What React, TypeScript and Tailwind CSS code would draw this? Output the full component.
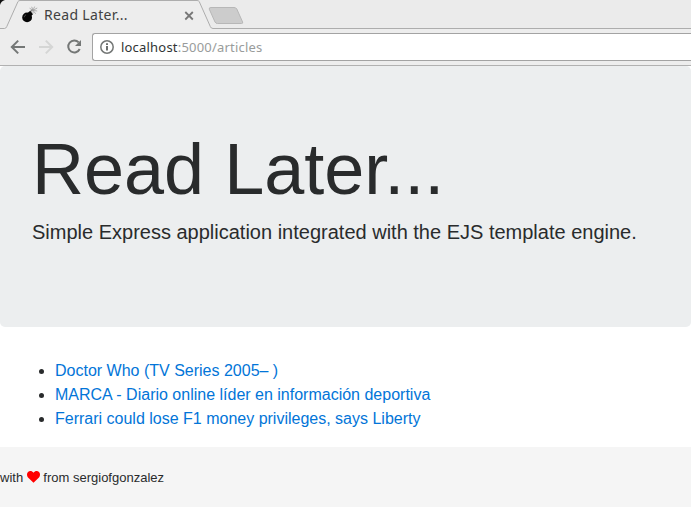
const articles = [
  'Doctor Who (TV Series 2005– )',
  'MARCA - Diario online líder en información deportiva',
  'Ferrari could lose F1 money privileges, says Liberty',
];

function BombIcon() {
  return (
    <svg width="17" height="17" viewBox="0 0 17 17" className="shrink-0">
      <circle cx="6.1" cy="11.4" r="4.9" fill="#050505" />
      <path d="M7 6.4 9.3 4.8 12 8.2 10 10Z" fill="#050505" />
      <path d="M3.3 11.2c0-1.2.7-2 1.8-2.3" stroke="#666" strokeWidth=".8" fill="none" />
      <path d="M10.2 5.6C10 3.9 10.8 3.6 12 4.2" stroke="#666" strokeWidth="1" fill="none" />
      <path
        d="M12 4.4 8.6 2.2M12 4.4 10.7.8M12 4.4 13.6.6M12 4.4 16.2 2M12 4.4 16.2 5M12 4.4 14.7 7.8M12 4.4 12 7.6"
        stroke="#a0a0a0"
        strokeWidth=".8"
      />
    </svg>
  );
}

function TabStrip() {
  return (
    <div className="relative h-[29px] bg-[#ebebeb]">
      <svg className="absolute inset-0" width="691" height="29" viewBox="0 0 691 29">
        <path d="M0 0H5Q1 1 0 5Z" fill="#111" />
        <path d="M0 28.5H4.5Q6 28.5 6.8 26.5L18 1.5Q18.6.5 20 .5H197Q198.6.5 199.2 1.5L210.3 26.5Q211 28.5 213 28.5H691V29H0Z" fill="#ededed" />
        <path d="M0 28.5H4.5Q6 28.5 6.8 26.5L18 1.5Q18.6.5 20 .5H197Q198.6.5 199.2 1.5L210.3 26.5Q211 28.5 213 28.5H691" fill="none" stroke="#adadad" />
        <path d="M211 7.5H234Q236 7.5 236.8 9L242.6 22Q243.2 23.5 241.5 23.5H217.5Q215.8 23.5 215 22L209.3 9.2Q208.7 7.5 211 7.5Z" fill="#cccccc" stroke="#b7b7b7" />
      </svg>
      <div className="relative flex h-full w-[196px] items-center pl-[21px] font-['Noto_Sans',sans-serif]">
        <BombIcon />
        <span className="ml-[6px] flex-1 whitespace-nowrap text-[14px] leading-none tracking-[0.33px] text-[#414141]">Read Later...</span>
        <svg width="12" height="12" viewBox="0 0 12 12" className="mt-[2px]">
          <path d="M1.3 2 8.8 9.5M8.8 2 1.3 9.5" stroke="#777" strokeWidth="1.8" />
        </svg>
      </div>
    </div>
  );
}

function Toolbar() {
  return (
    <div className="flex h-[37px] items-center border-b border-[#b1b1b1] bg-[#ededed] pl-[10px]">
      <svg width="82" height="28" viewBox="0 0 82 28" fill="none" className="shrink-0">
        <path d="M15 14H2M8.2 7.6 1.8 14 8.2 20.4" stroke="#747776" strokeWidth="2" />
        <path d="M29 14H42M35.8 7.6 42.2 14 35.8 20.4" stroke="#d5d6d5" strokeWidth="2" />
        <path d="M68.7 9.4A6 6 0 1 0 69.7 16" stroke="#747776" strokeWidth="2" />
        <path d="M71 7V13H65Z" fill="#747776" />
      </svg>
      <div className="flex h-7 flex-1 items-center rounded-l-[3px] border border-r-0 border-[#a3a3a3] bg-white pl-[7px] font-['Noto_Sans',sans-serif]">
        <svg width="14" height="14" viewBox="0 0 14 14" fill="none">
          <circle cx="7" cy="7" r="6.2" stroke="#747776" strokeWidth="1.5" />
          <path d="M7 6V10.5M7 3.3V5" stroke="#666968" strokeWidth="1.9" />
        </svg>
        <span className="ml-[7px] whitespace-nowrap text-[13px] leading-none tracking-[0.2px] text-[#999c9b]">
          <span className="text-[#303536]">localhost</span>:5000/articles
        </span>
      </div>
    </div>
  );
}

export default function App() {
  return (
    <div className="h-[509px] w-full overflow-hidden bg-white font-['Liberation_Sans',Arial,sans-serif] text-[#292b2c]">
      <TabStrip />
      <Toolbar />
      <header className="h-[261px] rounded-[5px] bg-[#eceeef] px-8 py-16">
        <h1 className="mb-2 text-[72px] leading-[1.1]">Read Later...</h1>
        <p className="text-xl leading-[30px]">Simple Express application integrated with the EJS template engine.</p>
      </header>
      <ul className="mt-8 mb-4 list-disc pl-[55px] text-base leading-6">
        {articles.map((title) => (
          <li key={title}>
            <a className="text-[#0275d8]">{title}</a>
          </li>
        ))}
      </ul>
      <footer className="flex h-[60px] items-center whitespace-pre bg-[#f5f5f5] text-[13px]">
        <span className="pt-px leading-5">with </span>
        <svg width="13" height="12" viewBox="0 0 13 12">
          <path d="M6.5 11.8 1 6.4C-.3 5-.3 2.5.8 1.2 2.4-.4 5-.3 6.5 1.8 8-.3 10.6-.4 12.2 1.2 13.3 2.5 13.3 5 12 6.4Z" fill="#f00" />
        </svg>
        <span className="pt-px leading-5"> from sergiofgonzalez</span>
      </footer>
    </div>
  );
}
